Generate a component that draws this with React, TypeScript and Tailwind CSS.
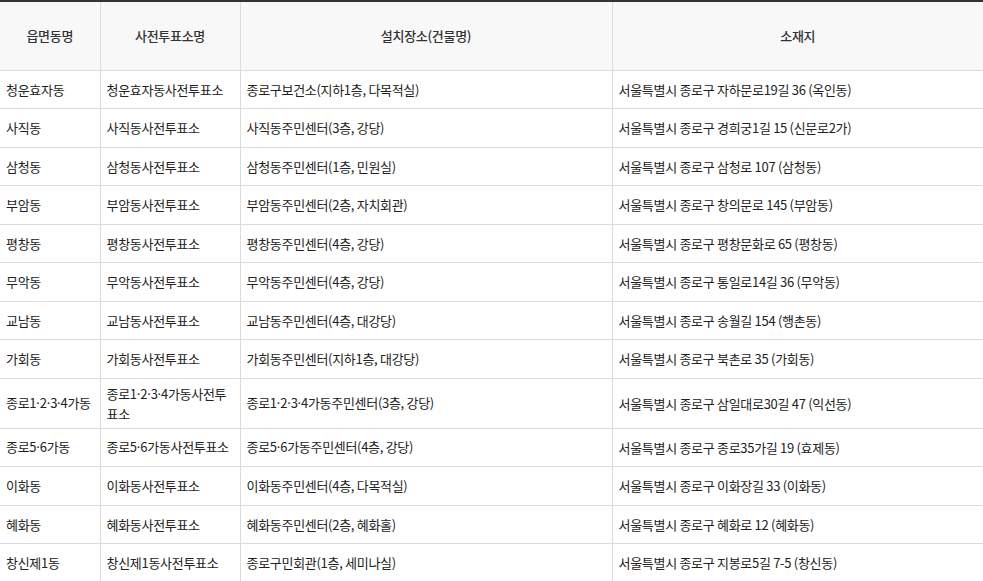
import React from "react";

const rows: string[][] = [
  ["청운효자동", "청운효자동사전투표소", "종로구보건소(지하1층, 다목적실)", "서울특별시 종로구 자하문로19길 36 (옥인동)"],
  ["사직동", "사직동사전투표소", "사직동주민센터(3층, 강당)", "서울특별시 종로구 경희궁1길 15 (신문로2가)"],
  ["삼청동", "삼청동사전투표소", "삼청동주민센터(1층, 민원실)", "서울특별시 종로구 삼청로 107 (삼청동)"],
  ["부암동", "부암동사전투표소", "부암동주민센터(2층, 자치회관)", "서울특별시 종로구 창의문로 145 (부암동)"],
  ["평창동", "평창동사전투표소", "평창동주민센터(4층, 강당)", "서울특별시 종로구 평창문화로 65 (평창동)"],
  ["무악동", "무악동사전투표소", "무악동주민센터(4층, 강당)", "서울특별시 종로구 통일로14길 36 (무악동)"],
  ["교남동", "교남동사전투표소", "교남동주민센터(4층, 대강당)", "서울특별시 종로구 송월길 154 (행촌동)"],
  ["가회동", "가회동사전투표소", "가회동주민센터(지하1층, 대강당)", "서울특별시 종로구 북촌로 35 (가회동)"],
  ["종로1·2·3·4가동", "종로1·2·3·4가동사전투표소", "종로1·2·3·4가동주민센터(3층, 강당)", "서울특별시 종로구 삼일대로30길 47 (익선동)"],
  ["종로5·6가동", "종로5·6가동사전투표소", "종로5·6가동주민센터(4층, 강당)", "서울특별시 종로구 종로35가길 19 (효제동)"],
  ["이화동", "이화동사전투표소", "이화동주민센터(4층, 다목적실)", "서울특별시 종로구 이화장길 33 (이화동)"],
  ["혜화동", "혜화동사전투표소", "혜화동주민센터(2층, 혜화홀)", "서울특별시 종로구 혜화로 12 (혜화동)"],
  ["창신제1동", "창신제1동사전투표소", "종로구민회관(1층, 세미나실)", "서울특별시 종로구 지봉로5길 7-5 (창신동)"],
];

const headers = ["읍면동명", "사전투표소명", "설치장소(건물명)", "소재지"];

function Cell({ text }: { text: string }) {
  const parts = text.split("·");
  return (
    <>
      {parts.map((p, i) => (
        <React.Fragment key={i}>
          {i > 0 && (
            <span
              className="tracking-normal"
              style={{ fontFamily: '"Noto Sans", "Liberation Sans", sans-serif' }}
            >
              ·
            </span>
          )}
          {p}
        </React.Fragment>
      ))}
    </>
  );
}

export default function App() {
  return (
    <div
      className="w-[983px] bg-white text-[#333] overflow-hidden"
      style={{ fontFamily: '"Noto Sans CJK KR", "Noto Sans", sans-serif' }}
    >
      <table className="w-full table-fixed border-collapse text-[13px] tracking-[-0.3px]">
        <colgroup>
          <col className="w-[100px]" />
          <col className="w-[140px]" />
          <col className="w-[372px]" />
          <col className="w-[371px]" />
        </colgroup>
        <thead>
          <tr className="h-[69px] border-t-2 border-[#333]">
            {headers.map((h, i) => (
              <th
                key={h}
                className={`bg-[#f8f8f8] font-medium text-[#333] text-center align-middle border-b border-[#dcdcdc] ${
                  i > 0 ? "border-l" : ""
                }`}
              >
                {h}
              </th>
            ))}
          </tr>
        </thead>
        <tbody>
          {rows.map((r, ri) => (
            <tr key={ri} className="h-[38.5px]">
              {r.map((c, ci) => (
                <td
                  key={ci}
                  className={`px-[6px] py-[5px] leading-[19px] text-left align-middle text-[#222] border-b border-[#dcdcdc] ${
                    ci > 0 ? "border-l" : ""
                  }`}
                >
                  <Cell text={c} />
                </td>
              ))}
            </tr>
          ))}
        </tbody>
      </table>
    </div>
  );
}
